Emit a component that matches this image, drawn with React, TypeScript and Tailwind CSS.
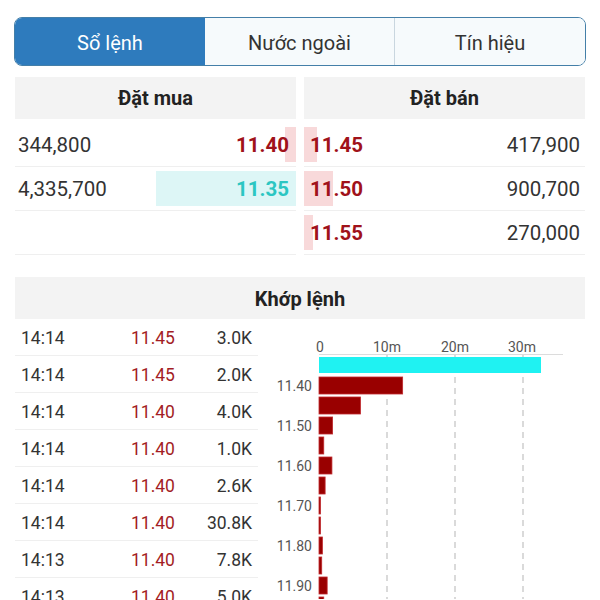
import React from "react";

const bids = [
  { qty: "344,800", price: "11.40", bar: 11, up: false },
  { qty: "4,335,700", price: "11.35", bar: 140, up: true },
  { qty: "", price: "", bar: 0, up: false },
];

const asks = [
  { qty: "417,900", price: "11.45", bar: 13 },
  { qty: "900,700", price: "11.50", bar: 29 },
  { qty: "270,000", price: "11.55", bar: 9 },
];

const trades = [
  ["14:14", "11.45", "3.0K"],
  ["14:14", "11.45", "2.0K"],
  ["14:14", "11.40", "4.0K"],
  ["14:14", "11.40", "1.0K"],
  ["14:14", "11.40", "2.6K"],
  ["14:14", "11.40", "30.8K"],
  ["14:13", "11.40", "7.8K"],
  ["14:13", "11.40", "5.0K"],
];

// volume per price step, in millions
const volumes = [12.3, 6.1, 2.0, 0.7, 1.9, 0.9, 0.2, 0.2, 0.5, 0.4, 1.2, 0.7];
const PX_PER_M = 6.8;
const X0 = 319;

export default function App() {
  return (
    <div className="w-[600px] h-[600px] overflow-hidden bg-white text-[#333] font-['Roboto','Liberation_Sans',sans-serif]">
      <div className="mx-[14px] mt-[17px] h-[49px] grid grid-cols-3 border-[1.5px] border-[#447fa8] rounded-[8px] overflow-hidden text-[20px]">
        <div className="bg-[#2e7bbd] text-white flex items-center justify-center pt-[2px]">Sổ lệnh</div>
        <div className="bg-[#f6fafc] border-r border-[#c9d6df] flex items-center justify-center pt-[2px]">Nước ngoài</div>
        <div className="bg-[#f6fafc] flex items-center justify-center pt-[2px]">Tín hiệu</div>
      </div>

      <div className="mx-[15px] mt-[11px] grid grid-cols-2 gap-x-2">
        <div className="h-[42px] bg-[#f3f3f3] flex items-center justify-center font-bold text-[20px] text-[#222]">Đặt mua</div>
        <div className="h-[42px] bg-[#f3f3f3] flex items-center justify-center font-bold text-[20px] text-[#222]">Đặt bán</div>
        <div className="mt-[4px]">
          {bids.map((b, i) => (
            <div key={i} className="relative h-[44px] border-b border-[#efefef] flex items-center justify-between pl-[3px] pr-[7px] pt-[2px] text-[20.5px]">
              {b.bar > 0 && (
                <div
                  className={`absolute right-0 top-[4px] bottom-[4px] ${b.up ? "bg-[#ddf6f6]" : "bg-[#f8d9da]"}`}
                  style={{ width: b.bar }}
                />
              )}
              <span className="relative">{b.qty}</span>
              <span className={`relative font-bold ${b.up ? "text-[#2cc6c2]" : "text-[#a0121a]"}`}>{b.price}</span>
            </div>
          ))}
        </div>
        <div className="mt-[4px]">
          {asks.map((a, i) => (
            <div key={i} className="relative h-[44px] border-b border-[#efefef] flex items-center justify-between pl-[6px] pr-[5px] pt-[2px] text-[20.5px]">
              <div className="absolute left-0 top-[4px] bottom-[4px] bg-[#f8d9da]" style={{ width: a.bar }} />
              <span className="relative font-bold text-[#a0121a]">{a.price}</span>
              <span className="relative">{a.qty}</span>
            </div>
          ))}
        </div>
      </div>

      <div className="mx-[15px] mt-[22px] h-[42px] bg-[#f3f3f3] flex items-center justify-center font-bold text-[20px] text-[#222] pt-[1px]">
        Khớp lệnh
      </div>

      <div className="flex">
        <div className="ml-[15px] w-[243px] shrink-0">
          {trades.map((t, i) => (
            <div key={i} className="h-[37px] border-b border-[#efefef] grid grid-cols-[110px_1fr_auto] items-center pl-[6px] pr-[6px] pt-[3px] text-[17.5px]">
              <span>{t[0]}</span>
              <span className="text-[#a31d24]">{t[1]}</span>
              <span>{t[2]}</span>
            </div>
          ))}
        </div>
        <svg width="342" height="280" viewBox="258 320 342 280" className="shrink-0" fontFamily="Roboto, 'Liberation Sans', sans-serif">
          {[387, 455, 523].map((x) => (
            <line key={x} x1={x} y1={356} x2={x} y2={600} stroke="#b5b5b5" strokeWidth="1" strokeDasharray="6 5" />
          ))}
          <line x1={X0} y1={355.5} x2={563} y2={355.5} stroke="#dcdcdc" strokeWidth="1" />
          {[
            ["0", 320],
            ["10m", 387],
            ["20m", 455],
            ["30m", 522],
          ].map(([t, x]) => (
            <text key={t} x={x} y={353} textAnchor="middle" fontSize="14" fill="#555">
              {t}
            </text>
          ))}
          <rect x={X0} y={358} width={222} height={16} fill="#1ff2f2" />
          {volumes.map((v, i) => (
            <rect
              key={i}
              x={X0}
              y={378 + i * 20}
              width={Math.max(1.5, v * PX_PER_M)}
              height={17}
              fill="#990000"
              stroke="#c0282d"
              strokeWidth="0.8"
            />
          ))}
          {["11.40", "11.50", "11.60", "11.70", "11.80", "11.90"].map((t, i) => (
            <text key={t} x={312} y={392 + i * 40} textAnchor="end" fontSize="14" fill="#555">
              {t}
            </text>
          ))}
        </svg>
      </div>
    </div>
  );
}
